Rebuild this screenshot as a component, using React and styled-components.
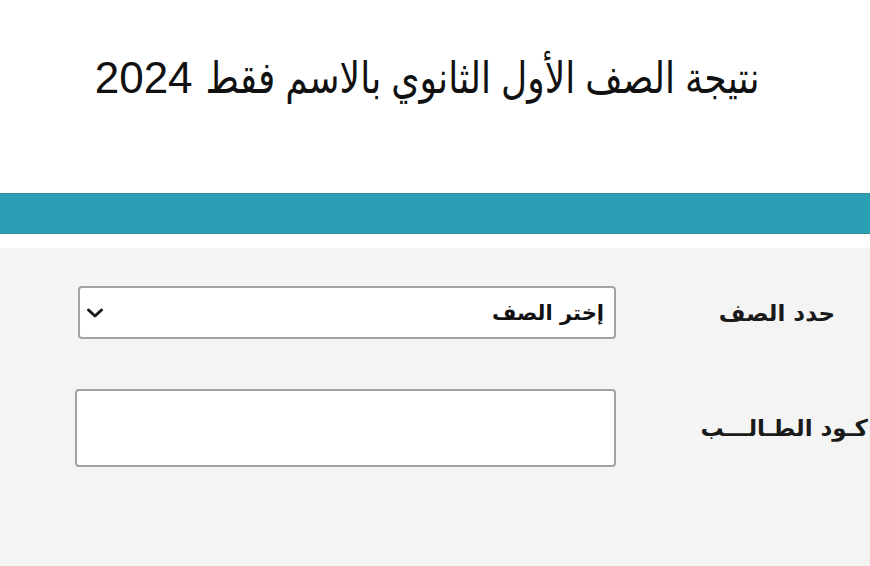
import React from "react";
import styled, { createGlobalStyle } from "styled-components";

const Global = createGlobalStyle`
  html, body { margin: 0; padding: 0; background: #f4f4f4; }
  body { font-family: "Liberation Sans", "DejaVu Sans", Arial, sans-serif; overflow: hidden; }
  * { box-sizing: border-box; }
`;

const Page = styled.div`
  width: 870px;
  height: 566px;
  display: flex;
  flex-direction: column;
  background: #f4f4f4;
  overflow: hidden;
`;

const Header = styled.header`
  height: 193px;
  background: #ffffff;
  display: flex;
  justify-content: center;
  padding-top: 50px;
`;

const Title = styled.h1`
  margin: 0;
  direction: rtl;
  font-family: "Liberation Sans", "DejaVu Sans", Arial, sans-serif;
  font-weight: 400;
  font-size: 44px;
  line-height: 56px;
  color: #111;
  white-space: nowrap;
  transform: translateX(-8px);
`;

const ArabicPart = styled.span`
  display: inline-block;
  transform: scaleX(0.82);
  transform-origin: right center;
  margin-left: -121px;
`;

const Bar = styled.div`
  height: 41px;
  background: #2a9fb3;
  border-top: 1px solid #3a8796;
  border-bottom: 1px solid #3a8796;
`;

const Strip = styled.div`
  height: 14px;
  background: #ffffff;
`;

const Form = styled.div`
  display: flex;
  flex-direction: column;
  padding-top: 38px;
  gap: 50px;
`;

const Row = styled.div`
  direction: rtl;
  display: grid;
  grid-template-columns: 254px auto;
  align-items: center;
`;

const Label = styled.label`
  font-family: "DejaVu Sans", "Liberation Sans", sans-serif;
  font-weight: 700;
  font-size: 23px;
  color: #1a1a1a;
  padding-right: ${(p) => p.$offset}px;
  white-space: nowrap;
`;

const SelectBox = styled.div`
  width: 538px;
  height: 53px;
  background: #fff;
  border: 2px solid #a3a3a3;
  border-radius: 4px;
  display: flex;
  align-items: center;
  justify-content: space-between;
  padding: 0 10px 0 6px;
  font-family: "DejaVu Sans", "Liberation Sans", sans-serif;
  font-weight: 700;
  font-size: 21px;
  color: #111;
`;

const TextBox = styled.input`
  width: 541px;
  height: 78px;
  background: #fff;
  border: 2px solid #a3a3a3;
  border-radius: 4px;
  outline: none;
  margin: 0;
`;

const Chevron = () => (
  <svg width="18" height="12" viewBox="0 0 18 12">
    <path d="M2.5 3 L9 9 L15.5 3" fill="none" stroke="#1a1a1a" strokeWidth="3" strokeLinecap="round" strokeLinejoin="round" />
  </svg>
);

export default function App() {
  return (
    <Page>
      <Global />
      <Header>
        <Title>
          <ArabicPart>نتيجة الصف الأول الثانوي بالاسم فقط</ArabicPart> 2024
        </Title>
      </Header>
      <Bar />
      <Strip />
      <Form>
        <Row>
          <Label $offset={35}>حدد الصف</Label>
          <SelectBox>
            <span>إختر الصف</span>
            <Chevron />
          </SelectBox>
        </Row>
        <Row>
          <Label $offset={2}>كـود الطـالـــب</Label>
          <TextBox type="text" />
        </Row>
      </Form>
    </Page>
  );
}
